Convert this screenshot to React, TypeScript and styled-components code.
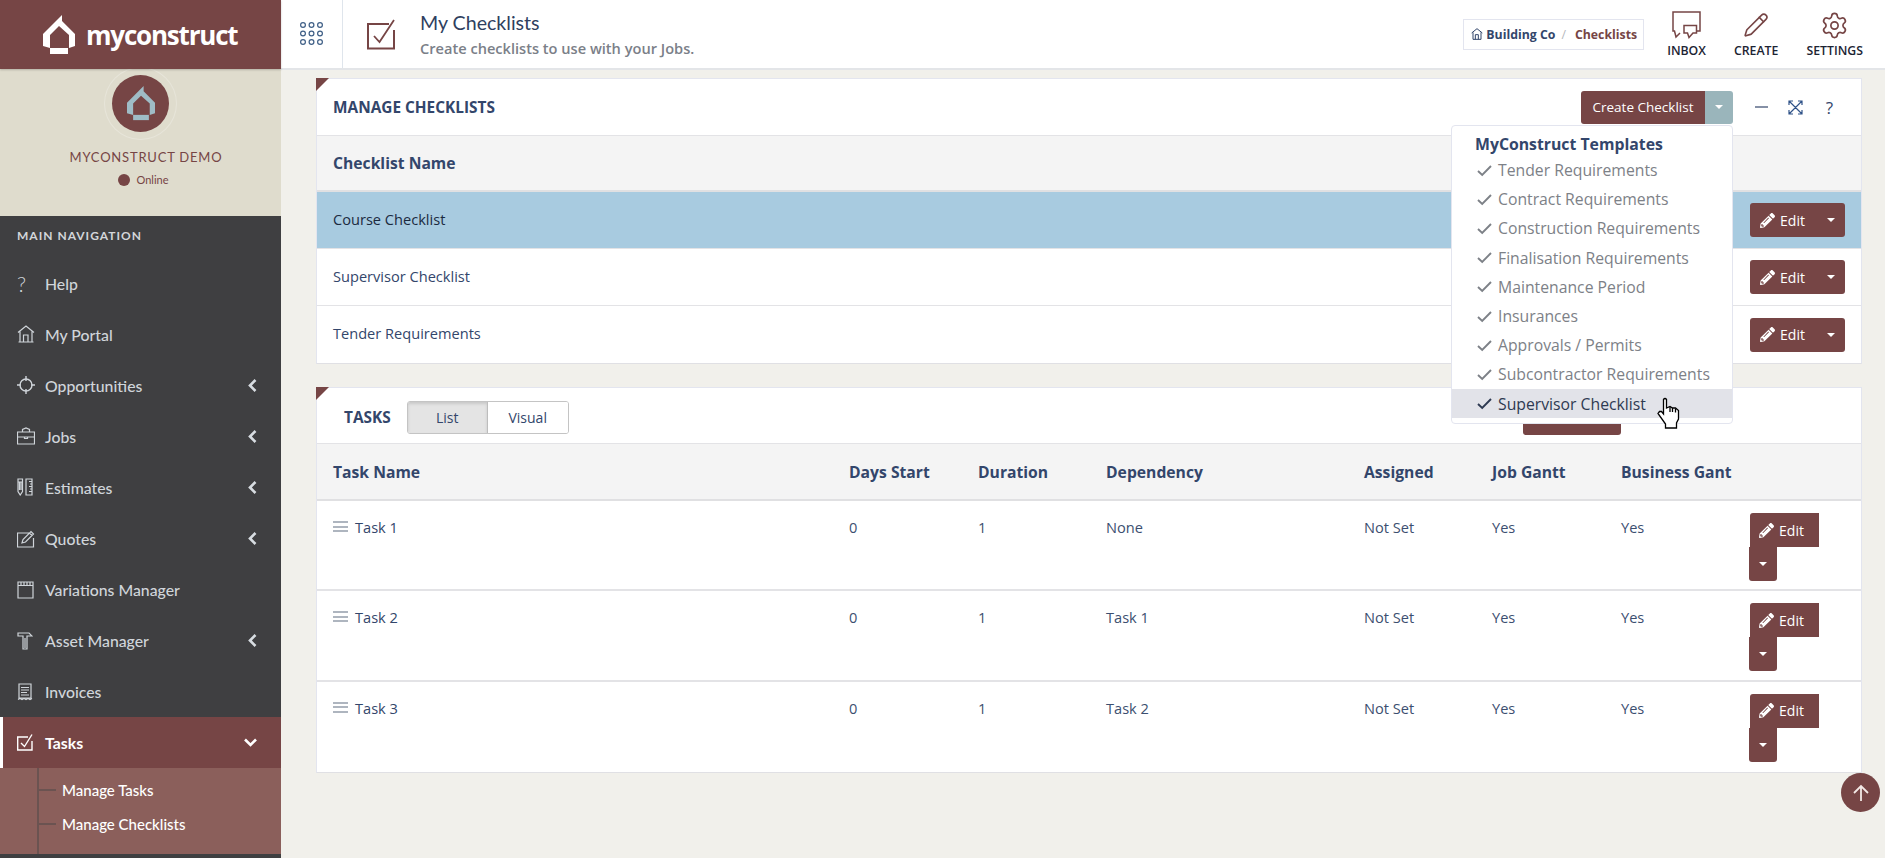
import { type ReactNode } from 'react';
import styled, { createGlobalStyle } from 'styled-components';
import { FaPencilAlt } from 'react-icons/fa';
import { Pencil, Settings } from 'lucide-react';

const maroon = '#764545';
const navy = '#33466b';
const sideFont = `Lato, "Open Sans", sans-serif`;

const GlobalStyle = createGlobalStyle`
  html, body {
    margin: 0;
    height: 100%;
    overflow: hidden;
    background: #f1f0eb;
    font-family: "Open Sans", "Liberation Sans", sans-serif;
    font-size: 14.6px;
    color: ${navy};
  }
  * { box-sizing: border-box; }
`;

const Page = styled.div`
  display: flex;
  width: 100%;
  height: 100vh;
  overflow: hidden;
`;

const Sidebar = styled.aside`
  flex: 0 0 281px;
  display: flex;
  flex-direction: column;
  background: #3f3f41;
  font-family: ${sideFont};
`;

const LogoBand = styled.div`
  height: 69px;
  display: flex;
  align-items: center;
  gap: 11px;
  padding-left: 43px;
  background: ${maroon};
  box-shadow: 0 1px 2px rgba(0, 0, 0, 0.2);
  position: relative;
`;

const LogoText = styled.span`
  font-family: "Open Sans", sans-serif;
  font-size: 26px;
  font-weight: 700;
  letter-spacing: -1.2px;
  color: #fff;
`;

const Profile = styled.div`
  height: 147px;
  display: flex;
  flex-direction: column;
  align-items: center;
  padding-top: 6px;
  background: #dfdccd;
`;

const Avatar = styled.div`
  width: 57px;
  height: 57px;
  border-radius: 50%;
  background: ${maroon};
  display: flex;
  align-items: center;
  justify-content: center;
  box-shadow: 0 0 0 7px #dfdccd, 0 0 0 8px rgba(255, 255, 255, 0.25);
`;

const ProfileName = styled.div`
  margin-top: 16px;
  padding-left: 11px;
  font-size: 13px;
  line-height: 18px;
  letter-spacing: 0.8px;
  color: ${maroon};
`;

const Online = styled.div`
  margin-top: 7px;
  padding-left: 6px;
  display: flex;
  align-items: center;
  gap: 6px;
  font-size: 11px;
  line-height: 14px;
  color: ${maroon};
  &::before {
    content: '';
    width: 12px;
    height: 12px;
    border-radius: 50%;
    background: ${maroon};
  }
`;

const NavTitle = styled.div`
  height: 41.5px;
  padding: 12px 17px 0;
  font-size: 12px;
  line-height: 15px;
  font-weight: 700;
  letter-spacing: 1px;
  color: #d3d6d9;
`;

const NavItem = styled.div<{ $active?: boolean }>`
  height: 51.1px;
  display: flex;
  align-items: center;
  padding-left: ${(p) => (p.$active ? '14px' : '17px')};
  padding-right: 24px;
  font-size: 15.8px;
  color: ${(p) => (p.$active ? '#fff' : '#d0d5da')};
  font-weight: ${(p) => (p.$active ? 700 : 500)};
  background: ${(p) => (p.$active ? maroon : 'transparent')};
  border-left: ${(p) => (p.$active ? '3px solid #fff' : '0')};
`;

const NavIconBox = styled.span`
  flex: 0 0 28px;
  display: flex;
  align-items: center;
  font-size: 21px;
  font-weight: 300;
  line-height: 1;
`;

const NavLabel = styled.span`
  flex: 1;
`;

const SubNav = styled.div`
  height: 85.5px;
  padding-top: 4.5px;
  background: #8b5f5b;
  position: relative;
  &::before {
    content: '';
    position: absolute;
    left: 37px;
    top: 0;
    bottom: 0;
    width: 2px;
    background: #6b5351;
  }
`;

const SubItem = styled.div`
  height: 34px;
  padding-left: 62px;
  display: flex;
  align-items: center;
  font-size: 15px;
  font-weight: 500;
  color: #fff;
  position: relative;
  &::before {
    content: '';
    position: absolute;
    left: 39px;
    top: 16px;
    width: 17px;
    height: 2px;
    background: #6b5351;
  }
`;

const Main = styled.main`
  flex: 1;
  min-width: 0;
  display: flex;
  flex-direction: column;
`;

const TopBar = styled.header`
  flex: 0 0 70px;
  display: flex;
  align-items: center;
  background: #fff;
  border-bottom: 2px solid #e3e5e8;
  padding-right: 22px;
`;

const AppsCell = styled.div`
  flex: 0 0 62px;
  height: 68px;
  display: flex;
  align-items: center;
  justify-content: center;
  border-right: 1px solid #dfe5ec;
`;

const TitleIconCell = styled.div`
  flex: 0 0 77px;
  display: flex;
  justify-content: center;
`;

const TitleBlock = styled.div`
  flex: 1;
`;

const PageTitle = styled.div`
  margin-bottom: 3px;
  font-family: ${sideFont};
  font-size: 19.6px;
  line-height: 24px;
  color: #2f3f60;
`;

const PageSub = styled.div`
  font-size: 14.6px;
  font-weight: 600;
  line-height: 20px;
  color: #7b8088;
`;

const Crumbs = styled.div`
  height: 31px;
  display: flex;
  align-items: center;
  gap: 3px;
  padding: 0 6px 0 7px;
  margin-right: 23px;
  border: 1px solid #e3e5ef;
  font-size: 12.3px;
  font-weight: 700;
  color: ${navy};
`;

const CrumbSep = styled.span`
  margin: 0 6px 0 3px;
  font-weight: 400;
  color: #b5b8bd;
`;

const CrumbNow = styled.span`
  color: ${maroon};
`;

const TopAction = styled.div`
  display: flex;
  flex-direction: column;
  align-items: center;
  gap: 1px;
  font-size: 12.3px;
  font-weight: 600;
  line-height: 17px;
  color: #1c2433;
  & + & {
    margin-left: 28px;
  }
`;

const TopActionIcon = styled.span`
  height: 31px;
  display: flex;
  align-items: center;
  color: ${maroon};
`;

const Content = styled.div`
  flex: 1;
  padding: 8px 23px 0 35px;
  display: flex;
  flex-direction: column;
  gap: 23px;
`;

const Panel = styled.section`
  background: #fff;
  border: 1px solid #e3e5ef;
  border-bottom-color: #e0e0e4;
  position: relative;
  &::before {
    content: '';
    position: absolute;
    left: -1px;
    top: -1px;
    border-style: solid;
    border-width: 13px 13px 0 0;
    border-color: ${maroon} transparent transparent transparent;
  }
`;

const PanelHeader = styled.div<{ $low?: boolean }>`
  height: ${(p) => (p.$low ? '55px' : '56px')};
  display: flex;
  align-items: center;
  padding: ${(p) => (p.$low ? '4px 23px 0 16px' : '0 23px 0 16px')};
`;

const PanelTitle = styled.h2<{ $inset?: boolean }>`
  margin: 0 ${(p) => (p.$inset ? '16px' : '0')} 0 ${(p) => (p.$inset ? '11px' : '0')};
  font-size: 15.4px;
  font-weight: 700;
  color: ${navy};
  text-transform: uppercase;
`;

const HeaderRight = styled.div`
  margin-left: auto;
  display: flex;
  align-items: center;
`;

const SplitButton = styled.div`
  display: flex;
  position: relative;
  margin-right: 20px;
`;

const CreateButton = styled.button`
  width: 124px;
  height: 33px;
  border: 0;
  border-radius: 3px 0 0 3px;
  background: ${maroon};
  color: #fff;
  font: 400 13.5px "Open Sans", sans-serif;
`;

const CreateCaret = styled.button`
  width: 28px;
  height: 33px;
  border: 0;
  border-radius: 0 3px 3px 0;
  background: #9ab5bb;
  display: flex;
  align-items: center;
  justify-content: center;
`;

const Caret = styled.span`
  width: 0;
  height: 0;
  border-style: solid;
  border-width: 4px 4px 0;
  border-color: #fff transparent transparent;
`;

const WindowIcons = styled.div`
  display: flex;
  align-items: center;
  gap: 17px;
`;

const WindowIcon = styled.span<{ $offset?: number }>`
  width: 17px;
  height: 17px;
  margin-right: ${(p) => p.$offset ?? 0}px;
  display: flex;
  align-items: center;
  justify-content: center;
  font-size: 17px;
  color: ${navy};
`;

const Menu = styled.div`
  position: absolute;
  top: 34px;
  right: 0;
  width: 282px;
  padding: 6px 0 5px;
  background: #fff;
  border: 1px solid #e3e5ef;
  border-radius: 4px;
  z-index: 5;
`;

const MenuTitle = styled.div`
  padding-left: 23px;
  font-size: 15.8px;
  font-weight: 700;
  line-height: 24px;
  color: ${navy};
`;

const MenuItem = styled.div<{ $hover?: boolean }>`
  height: 29.2px;
  display: flex;
  align-items: center;
  gap: 6px;
  padding-left: 25px;
  font-size: 15.75px;
  color: ${(p) => (p.$hover ? '#2e3a52' : '#7d8187')};
  background: ${(p) => (p.$hover ? '#e2e3e9' : 'transparent')};
  position: relative;
`;

const Cursor = styled.svg`
  position: absolute;
  left: 205px;
  top: 8px;
  z-index: 6;
`;

const TableHead = styled.div<{ $cols?: string; $height: number }>`
  height: ${(p) => p.$height}px;
  display: grid;
  grid-template-columns: ${(p) => p.$cols ?? '1fr'};
  align-items: center;
  padding-left: 16px;
  background: #f4f4f4;
  border-top: 1px solid #e3e3e6;
  border-bottom: 2px solid #e0e0e2;
  font-size: 15.7px;
  font-weight: 700;
  color: ${navy};
`;

const ChecklistRow = styled.div<{ $selected?: boolean }>`
  height: 57px;
  display: flex;
  align-items: center;
  justify-content: space-between;
  padding: 0 16px;
  background: ${(p) => (p.$selected ? '#a8cbe0' : '#fff')};
  color: ${(p) => (p.$selected ? '#1b2a3f' : navy)};
  border-bottom: 1px solid #e3e3e6;
  &:last-child {
    border-bottom: 0;
  }
`;

const ChecklistName = styled.span`
  margin-bottom: 3px;
`;

const TaskRow = styled.div<{ $cols: string }>`
  height: 90.4px;
  display: grid;
  grid-template-columns: ${(p) => p.$cols};
  padding: 12px 0 0 16px;
  border-bottom: 2px solid #e3e3e6;
  line-height: 20px;
  color: #3c4f70;
  &:last-child {
    border-bottom: 0;
  }
`;

const TaskCell = styled.div`
  padding-top: 4px;
`;

const TaskName = styled(TaskCell)`
  display: flex;
  gap: 7px;
  color: ${navy};
`;

const Grip = styled.span`
  width: 15px;
  height: 11px;
  margin-top: 4px;
  border-top: 2px solid #aeb5bf;
  border-bottom: 2px solid #aeb5bf;
  position: relative;
  &::after {
    content: '';
    position: absolute;
    left: 0;
    right: 0;
    top: 2.5px;
    height: 2px;
    background: #aeb5bf;
  }
`;

const Actions = styled.div<{ $stacked?: boolean }>`
  display: flex;
  flex-direction: ${(p) => (p.$stacked ? 'column' : 'row')};
  align-items: flex-start;
`;

const EditButton = styled.button<{ $stacked?: boolean }>`
  height: 34px;
  width: ${(p) => (p.$stacked ? '69px' : '67px')};
  padding-left: ${(p) => (p.$stacked ? '0' : '4px')};
  border: 0;
  border-radius: ${(p) => (p.$stacked ? '3px 0 0 0' : '3px 0 0 3px')};
  background: ${maroon};
  color: #fff;
  font: 400 14px "Open Sans", sans-serif;
  display: flex;
  align-items: center;
  justify-content: center;
  gap: 5px;
`;

const EditCaret = styled.button<{ $stacked?: boolean }>`
  width: 28px;
  height: 34px;
  border: 0;
  margin-left: ${(p) => (p.$stacked ? '-1px' : '0')};
  border-radius: ${(p) => (p.$stacked ? '0 0 3px 3px' : '0 3px 3px 0')};
  background: ${maroon};
  display: flex;
  align-items: center;
  justify-content: center;
`;

const Toggle = styled.div`
  display: flex;
  height: 33px;
  border: 1px solid #c4c4c4;
  border-radius: 3px;
  overflow: hidden;
`;

const ToggleOption = styled.div<{ $on?: boolean }>`
  width: 80px;
  display: flex;
  align-items: center;
  justify-content: center;
  font-size: 14px;
  color: ${navy};
  background: ${(p) => (p.$on ? '#e4e4e4' : '#fff')};
  box-shadow: ${(p) => (p.$on ? 'inset 0 2px 3px rgba(0,0,0,0.12)' : 'none')};
  border-right: ${(p) => (p.$on ? '1px solid #bdbdbd' : '0')};
`;

const HiddenCreate = styled.div`
  width: 98px;
  height: 34px;
  margin-right: 82px;
  background: ${maroon};
  border-radius: 3px;
`;

const ScrollTop = styled.button`
  position: fixed;
  right: 5px;
  bottom: 46px;
  width: 39px;
  height: 39px;
  border: 0;
  padding: 0;
  border-radius: 50%;
  background: ${maroon};
  display: flex;
  align-items: center;
  justify-content: center;
`;

const Line = styled.svg.attrs<{ $color?: string; strokeWidth?: number }>((p) => ({
  fill: 'none',
  stroke: 'currentColor',
  strokeWidth: p.strokeWidth ?? 1.2,
}))`
  display: block;
  color: ${(p) => p.$color ?? 'inherit'};
`;

function HouseMark({ size, color }: { size: number; color: string }) {
  return (
    <svg width={size} height={(size * 39) / 32} viewBox="0 0 32 39" fill={color}>
      <path d="M19 0V6L32 19V31L26 33V20L16 11L7 20V33L0 31V19Z" />
      <rect x="7" y="33" width="18" height="6" />
    </svg>
  );
}

function AppsIcon() {
  const dots: ReactNode[] = [];
  [0, 1, 2].forEach((r) =>
    [0, 1, 2].forEach((c) =>
      dots.push(<circle key={`${r}${c}`} cx={3 + c * 8.5} cy={3 + r * 8.5} r={2.4} />),
    ),
  );
  return (
    <Line width="24" height="24" viewBox="0 0 24 24" $color="#3f5f86">
      {dots}
    </Line>
  );
}

function TitleCheck() {
  return (
    <svg width="29" height="31" viewBox="0 0 29 31" fill="none" stroke={maroon}>
      <path d="M22 5H1V29.5H27V11" strokeWidth="2" />
      <path d="M7 17L12.5 23L27 1" strokeWidth="1.8" />
    </svg>
  );
}

function InboxIcon() {
  return (
    <Line width="29" height="28" viewBox="0 0 29 28" strokeWidth={1.5}>
      <path d="M8 22L4 26L2.5 20H1V1H28V20H25" />
      <path d="M12 14.5H24.5V22H21L17 26.5L15.5 22H12Z" />
    </Line>
  );
}

const navIcons: Record<string, ReactNode> = {
  help: '?',
  portal: (
    <Line width="18" height="18" viewBox="0 0 18 18">
      <path d="M1 7.5L9 1L17 7.5M3 6.5V17H15V6.5M6.5 17V10H11V17M1.5 17H16.5" />
    </Line>
  ),
  target: (
    <Line width="18" height="18" viewBox="0 0 18 18" strokeWidth={1.4}>
      <circle cx="9" cy="9" r="6" />
      <path d="M9 0V5M9 13V18M0 9H4M14 9H18" />
    </Line>
  ),
  jobs: (
    <Line width="18" height="18" viewBox="0 0 18 18">
      <path d="M.5 5H17.5V17H.5ZM.5 10H17.5M5.5 5V2.5L9 1L12.5 2.5V5M7.5 10V11.5H10.5V10" />
    </Line>
  ),
  estimates: (
    <Line width="16" height="18" viewBox="0 0 16 18">
      <path d="M1 1H5.5V13.5L3.2 17L1 13.5ZM1 4H5.5M2.5 4V12M4 4V12M9 1H15V17H9ZM12 3.5H15M13 6H15M12 8.5H15M13 11H15M12 13.5H15" />
    </Line>
  ),
  quotes: (
    <Line width="18" height="18" viewBox="0 0 18 18">
      <path d="M12 3H.5V17H16.5V8M5 13L6 9.5L14 1.5L16.5 4L8.5 12ZM12.5 3L15 5.5" />
    </Line>
  ),
  variations: (
    <Line width="17" height="18" viewBox="0 0 17 18">
      <path d="M1 1H16V17H1ZM1 4.5H16M4 1V4M7 1V4M10 1V4M13 1V4" />
    </Line>
  ),
  asset: (
    <Line width="16" height="18" viewBox="0 0 16 18">
      <path d="M1 1H12L15 4H10V17H6V4H1ZM8 6V16" />
    </Line>
  ),
  invoices: (
    <Line width="16" height="18" viewBox="0 0 16 18">
      <path d="M2 1H14V15H2ZM1 16.5L3 15.5L5 16.5L7 15.5L9 16.5L11 15.5L13 16.5L15 15.5M4 4.5H12M4 7H12M4 9.5H10M4 12H12" />
    </Line>
  ),
  tasks: (
    <Line width="16" height="17" viewBox="0 0 16 17" strokeWidth={1.4}>
      <path d="M11 3H.7V16H15V7M4 9L7.5 12.5L15 .5" />
    </Line>
  ),
};

const ChevronLeft = () => (
  <Line width="9" height="13" viewBox="0 0 9 13" strokeWidth={2.6} $color="#d8dde2">
    <path d="M7.5 1L2 6.5L7.5 12" />
  </Line>
);

const ChevronDown = () => (
  <Line width="13" height="9" viewBox="0 0 13 9" strokeWidth={2.6} $color="#fff">
    <path d="M1 1.5L6.5 7L12 1.5" />
  </Line>
);

const navItems = [
  { icon: 'help', label: 'Help' },
  { icon: 'portal', label: 'My Portal' },
  { icon: 'target', label: 'Opportunities', more: true },
  { icon: 'jobs', label: 'Jobs', more: true },
  { icon: 'estimates', label: 'Estimates', more: true },
  { icon: 'quotes', label: 'Quotes', more: true },
  { icon: 'variations', label: 'Variations Manager' },
  { icon: 'asset', label: 'Asset Manager', more: true },
  { icon: 'invoices', label: 'Invoices' },
];

const templates = [
  'Tender Requirements',
  'Contract Requirements',
  'Construction Requirements',
  'Finalisation Requirements',
  'Maintenance Period',
  'Insurances',
  'Approvals / Permits',
  'Subcontractor Requirements',
  'Supervisor Checklist',
];

const checklists = ['Course Checklist', 'Supervisor Checklist', 'Tender Requirements'];

const taskCols = '516px 129px 128px 258px 128px 129px 129px 1fr';

const taskHeads = ['Task Name', 'Days Start', 'Duration', 'Dependency', 'Assigned', 'Job Gantt', 'Business Gant', ''];

const tasks = [
  { name: 'Task 1', dependency: 'None' },
  { name: 'Task 2', dependency: 'Task 1' },
  { name: 'Task 3', dependency: 'Task 2' },
];

function EditGroup({ stacked }: { stacked?: boolean }) {
  return (
    <Actions $stacked={stacked}>
      <EditButton $stacked={stacked}>
        <FaPencilAlt size={15} />
        Edit
      </EditButton>
      <EditCaret $stacked={stacked}>
        <Caret />
      </EditCaret>
    </Actions>
  );
}

export default function App() {
  return (
    <Page>
      <GlobalStyle />
      <Sidebar>
        <LogoBand>
          <HouseMark size={32} color="#fff" />
          <LogoText>myconstruct</LogoText>
        </LogoBand>
        <Profile>
          <Avatar>
            <HouseMark size={28} color="#9fbcc6" />
          </Avatar>
          <ProfileName>MYCONSTRUCT DEMO</ProfileName>
          <Online>Online</Online>
        </Profile>
        <NavTitle>MAIN NAVIGATION</NavTitle>
        {navItems.map((item) => (
          <NavItem key={item.label}>
            <NavIconBox>{navIcons[item.icon]}</NavIconBox>
            <NavLabel>{item.label}</NavLabel>
            {item.more && <ChevronLeft />}
          </NavItem>
        ))}
        <NavItem $active>
          <NavIconBox>{navIcons.tasks}</NavIconBox>
          <NavLabel>Tasks</NavLabel>
          <ChevronDown />
        </NavItem>
        <SubNav>
          <SubItem>Manage Tasks</SubItem>
          <SubItem>Manage Checklists</SubItem>
        </SubNav>
      </Sidebar>
      <Main>
        <TopBar>
          <AppsCell>
            <AppsIcon />
          </AppsCell>
          <TitleIconCell>
            <TitleCheck />
          </TitleIconCell>
          <TitleBlock>
            <PageTitle>My Checklists</PageTitle>
            <PageSub>Create checklists to use with your Jobs.</PageSub>
          </TitleBlock>
          <Crumbs>
            <Line width="12" height="12" viewBox="0 0 18 18" strokeWidth={1.5}>
              <path d="M1 7.5L9 1L17 7.5M3 6.5V17H15V6.5M6.5 17V10H11V17" />
            </Line>
            Building Co
            <CrumbSep>/</CrumbSep>
            <CrumbNow>Checklists</CrumbNow>
          </Crumbs>
          <TopAction>
            <TopActionIcon>
              <InboxIcon />
            </TopActionIcon>
            INBOX
          </TopAction>
          <TopAction>
            <TopActionIcon>
              <Pencil size={26} strokeWidth={1.5} />
            </TopActionIcon>
            CREATE
          </TopAction>
          <TopAction>
            <TopActionIcon>
              <Settings size={29} strokeWidth={1.4} />
            </TopActionIcon>
            SETTINGS
          </TopAction>
        </TopBar>
        <Content>
          <Panel>
            <PanelHeader>
              <PanelTitle>Manage Checklists</PanelTitle>
              <HeaderRight>
                <SplitButton>
                  <CreateButton>Create Checklist</CreateButton>
                  <CreateCaret>
                    <Caret />
                  </CreateCaret>
                  <Menu>
                    <MenuTitle>MyConstruct Templates</MenuTitle>
                    {templates.map((name) => {
                      const hover = name === 'Supervisor Checklist';
                      return (
                        <MenuItem key={name} $hover={hover}>
                          <Line width="15" height="13" viewBox="0 0 15 13" strokeWidth={1.9}>
                            <path d="M1 7L5.2 11L14 2" />
                          </Line>
                          {name}
                          {hover && (
                            <Cursor width="23" height="32" viewBox="0 0 23 32" fill="#fff" stroke="#000" strokeWidth="1.3">
                              <path d="M6.5 2.5Q8 .5 9.5 2.5V11L13 9.5L15.5 11L18.5 11L21.5 13.5V22L19.5 26V31H8.5V27L1 16.5L2.5 14.5L4.5 14.5L6.5 17Z" />
                              <path d="M13 10V15M15.5 11V15M18.5 11.5V15.5" />
                            </Cursor>
                          )}
                        </MenuItem>
                      );
                    })}
                  </Menu>
                </SplitButton>
                <WindowIcons>
                  <WindowIcon>
                    <Line width="13" height="2" viewBox="0 0 13 2">
                      <path d="M0 1H13" />
                    </Line>
                  </WindowIcon>
                  <WindowIcon>
                    <Line width="15" height="15" viewBox="0 0 15 15" $color="#2f5288">
                      <path d="M1 1L14 14M14 1L1 14M1 5V1H5M10 1H14V5M14 10V14H10M5 14H1V10" />
                    </Line>
                  </WindowIcon>
                  <WindowIcon>?</WindowIcon>
                </WindowIcons>
              </HeaderRight>
            </PanelHeader>
            <TableHead $height={57}>Checklist Name</TableHead>
            {checklists.map((name, i) => (
              <ChecklistRow key={name} $selected={i === 0}>
                <ChecklistName>{name}</ChecklistName>
                <EditGroup />
              </ChecklistRow>
            ))}
          </Panel>
          <Panel>
            <PanelHeader $low>
              <PanelTitle $inset>Tasks</PanelTitle>
              <Toggle>
                <ToggleOption $on>List</ToggleOption>
                <ToggleOption>Visual</ToggleOption>
              </Toggle>
              <HeaderRight>
                <HiddenCreate />
                <WindowIcon $offset={118}>?</WindowIcon>
              </HeaderRight>
            </PanelHeader>
            <TableHead $cols={taskCols} $height={58}>
              {taskHeads.map((head) => (
                <div key={head}>{head}</div>
              ))}
            </TableHead>
            {tasks.map((task) => (
              <TaskRow key={task.name} $cols={taskCols}>
                <TaskName>
                  <Grip />
                  {task.name}
                </TaskName>
                <TaskCell>0</TaskCell>
                <TaskCell>1</TaskCell>
                <TaskCell>{task.dependency}</TaskCell>
                <TaskCell>Not Set</TaskCell>
                <TaskCell>Yes</TaskCell>
                <TaskCell>Yes</TaskCell>
                <EditGroup stacked />
              </TaskRow>
            ))}
          </Panel>
        </Content>
      </Main>
      <ScrollTop aria-label="Back to top">
        <Line width="18" height="18" viewBox="0 0 18 18" strokeWidth={1.8} $color="#f3e9e6">
          <path d="M9 17V2M2 9L9 2L16 9" />
        </Line>
      </ScrollTop>
    </Page>
  );
}
